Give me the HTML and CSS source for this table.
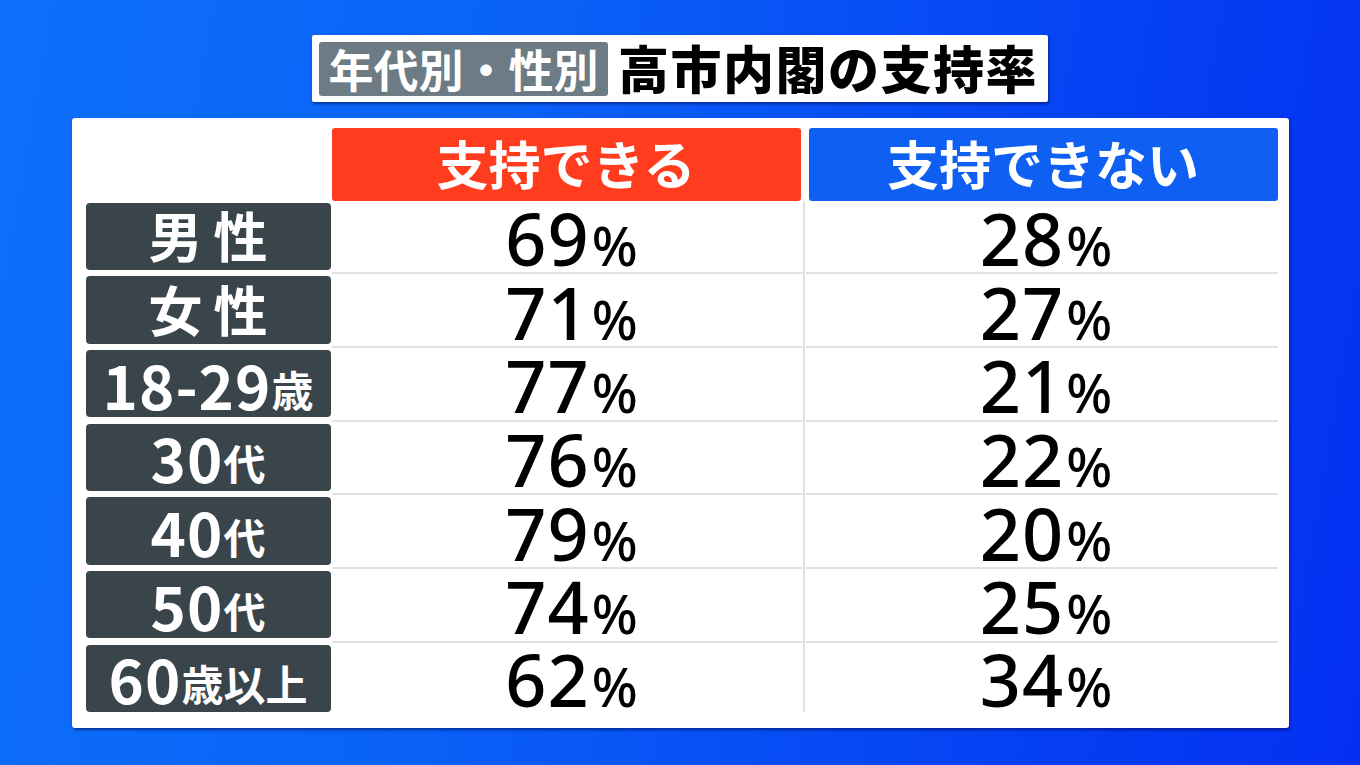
FILE: index.html
```html
<!DOCTYPE html>
<html lang="ja">
<head>
<meta charset="utf-8">
<title>年代別・性別 高市内閣の支持率</title>
<link rel="stylesheet" href="styles.css">
</head>
<body>
<div class="screen">
  <div class="title">
    <span class="title-tag">年代別・性別</span>
    <span class="title-main">高市内閣の支持率</span>
  </div>
  <div class="panel">
    <div class="grid">
      <div class="corner"></div>
      <div class="head head-yes">支持できる</div>
      <div class="head head-no">支持できない</div>

      <div class="label"><span class="kanji-pair">男性</span></div>
      <div class="val val-yes"><span class="v">69<span class="pct">%</span></span></div>
      <div class="val val-no"><span class="v">28<span class="pct">%</span></span></div>

      <div class="label"><span class="kanji-pair">女性</span></div>
      <div class="val val-yes"><span class="v">71<span class="pct">%</span></span></div>
      <div class="val val-no"><span class="v">27<span class="pct">%</span></span></div>

      <div class="label"><span class="num">18-29</span><span class="unit">歳</span></div>
      <div class="val val-yes"><span class="v">77<span class="pct">%</span></span></div>
      <div class="val val-no"><span class="v">21<span class="pct">%</span></span></div>

      <div class="label"><span class="num">30</span><span class="unit">代</span></div>
      <div class="val val-yes"><span class="v">76<span class="pct">%</span></span></div>
      <div class="val val-no"><span class="v">22<span class="pct">%</span></span></div>

      <div class="label"><span class="num">40</span><span class="unit">代</span></div>
      <div class="val val-yes"><span class="v">79<span class="pct">%</span></span></div>
      <div class="val val-no"><span class="v">20<span class="pct">%</span></span></div>

      <div class="label"><span class="num">50</span><span class="unit">代</span></div>
      <div class="val val-yes"><span class="v">74<span class="pct">%</span></span></div>
      <div class="val val-no"><span class="v">25<span class="pct">%</span></span></div>

      <div class="label"><span class="num">60</span><span class="unit">歳以上</span></div>
      <div class="val val-yes last"><span class="v">62<span class="pct">%</span></span></div>
      <div class="val val-no last"><span class="v">34<span class="pct">%</span></span></div>
    </div>
  </div>
</div>
</body>
</html>
```
FILE: styles.css
```css
html, body {
  margin: 0;
  padding: 0;
}

body {
  width: 1360px;
  height: 765px;
  overflow: hidden;
  background: linear-gradient(100deg, #0d70f9 0%, #0a62f7 35%, #0645f4 70%, #042ff2 100%);
  font-family: "Noto Sans CJK JP", "Noto Sans", sans-serif;
}

.screen {
  display: flex;
  flex-direction: column;
  align-items: center;
  padding-top: 35px;
}

/* ---------- title ---------- */
.title {
  display: flex;
  align-items: center;
  background: #ffffff;
  height: 67px;
  box-sizing: border-box;
  padding: 0 10px 0 7px;
  gap: 10px;
  border-radius: 2px;
  box-shadow: 1px 2px 3px rgba(0, 10, 80, 0.55);
}

.title-tag {
  display: flex;
  align-items: center;
  justify-content: center;
  background: #6d7c84;
  color: #ffffff;
  width: 289px;
  height: 54px;
  border-radius: 3px;
  font-size: 45px;
  font-weight: 700;
  line-height: 1;
}

.title-main {
  color: #000000;
  font-size: 51px;
  font-weight: 900;
  letter-spacing: 1.5px;
  line-height: 1;
  padding-bottom: 2px;
}

/* ---------- panel ---------- */
.panel {
  margin-top: 16px;
  width: 1217px;
  height: 610px;
  box-sizing: border-box;
  padding: 10px 12px 0 14px;
  background: #ffffff;
  border-radius: 3px;
  box-shadow: 1px 2px 3px rgba(0, 10, 80, 0.55);
}

.grid {
  display: grid;
  grid-template-columns: 245px 473px 472px;
  grid-template-rows: 72.7px repeat(7, 73.67px);
  column-gap: 1px;
}

.head {
  display: flex;
  align-items: center;
  justify-content: center;
  color: #ffffff;
  font-size: 52px;
  font-weight: 700;
  line-height: 1;
  border-radius: 3px;
  padding-bottom: 2px;
}

.head-yes {
  background: #ff3d1e;
  margin-right: 4px;
}

.head-no {
  background: #0e5ff2;
  margin-left: 3px;
}

/* ---------- row labels ---------- */
.label {
  display: flex;
  align-items: center;
  justify-content: center;
  margin-top: 2px;
  height: 67.3px;
  background: #3a444b;
  border-radius: 4px;
  color: #ffffff;
  font-weight: 700;
  line-height: 1;
}

.kanji-pair {
  font-size: 54px;
  letter-spacing: 11px;
  padding-left: 11px;
  padding-bottom: 2px;
}

.label .num {
  font-size: 60px;
  letter-spacing: 1px;
}

.label .unit {
  font-size: 42px;
  padding-top: 10px;
}

/* ---------- values ---------- */
.val {
  display: flex;
  align-items: center;
  justify-content: center;
  box-sizing: border-box;
  padding-left: 10px;
  padding-top: 4px;
  color: #000000;
  border-bottom: 2px solid #e2e2e2;
}

.v {
  font-family: "Noto Sans", "Noto Sans CJK JP", sans-serif;
  font-size: 72px;
  font-weight: 500;
  line-height: 0.85;
  letter-spacing: 1px;
}

.val-yes {
  border-right: 2px solid #e2e2e2;
}

.val.last {
  border-bottom: none;
  margin-bottom: 4px;
}

.pct {
  font-size: 54px;
  margin-left: 2px;
}
```
